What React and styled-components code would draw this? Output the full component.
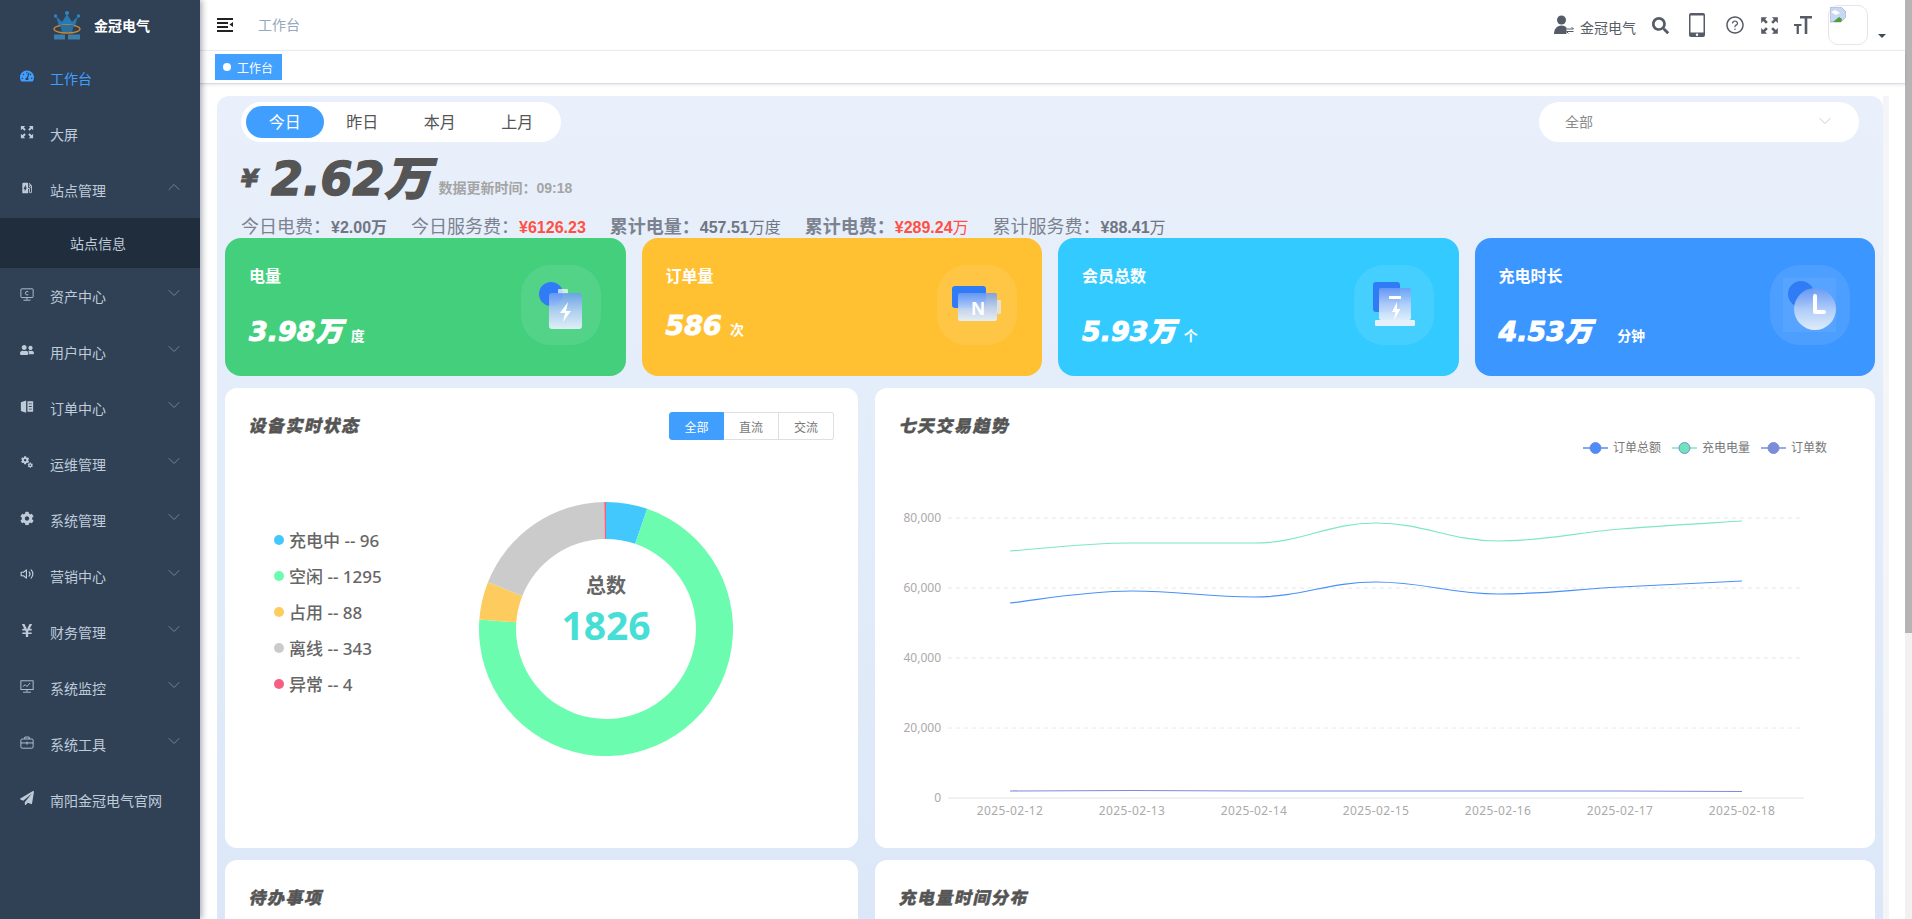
import React from 'react';
import styled, { createGlobalStyle } from 'styled-components';
import { ChevronDown, ChevronUp } from 'lucide-react';
import {
  FaTachometerAlt,
  FaUserFriends,
  FaCog,
  FaYenSign,
  FaPaperPlane,
  FaSearch,
} from 'react-icons/fa';
import { MdEvStation, MdMiscellaneousServices } from 'react-icons/md';
import { FiVolume2 } from 'react-icons/fi';
import { AiOutlineQuestionCircle } from 'react-icons/ai';

const SANS = '"Liberation Sans", "Noto Sans CJK SC", sans-serif';
const HEAVY = '"DejaVu Sans", "Noto Sans CJK SC", sans-serif';
const NOTO = '"Noto Sans", "Noto Sans CJK SC", sans-serif';

const GlobalStyle = createGlobalStyle`
  html, body {
    margin: 0;
    height: 100%;
    overflow: hidden;
    background: #fff;
    font-family: ${SANS};
  }
  * { box-sizing: border-box; }
`;

const Layout = styled.div`
  display: flex;
  width: 1912px;
  height: 919px;
  overflow: hidden;
`;

/* sidebar */
const Sidebar = styled.aside`
  width: 200px;
  flex: none;
  background: #304156;
  box-shadow: 2px 0 6px rgba(0, 21, 41, 0.35);
  position: relative;
  z-index: 2;
`;

const Brand = styled.div`
  height: 50px;
  display: flex;
  align-items: center;
  padding-left: 53px;
  gap: 13px;
  color: #fff;
  font-size: 14px;
  font-weight: 700;
  font-family: "Noto Sans CJK SC", sans-serif;
`;

const MenuRow = styled.div`
  height: 56px;
  display: flex;
  align-items: center;
  padding-left: 20px;
  font-size: 14px;
  color: ${(p) => (p.$active ? '#409eff' : '#bfcbd9')};
`;

const MenuIcon = styled.span`
  width: 14px;
  height: 14px;
  margin-right: 16px;
  margin-top: -4px;
  display: flex;
  align-items: center;
  justify-content: center;
`;

const Chevron = styled.span`
  margin-left: auto;
  margin-right: 16px;
  margin-top: -6px;
  display: flex;
  color: #74828f;
`;

const SubRow = styled.div`
  height: 50px;
  display: flex;
  align-items: center;
  padding-left: 70px;
  background: #1f2d3d;
  font-size: 14px;
  color: #bfcbd9;
`;

/* navbar and tags */
const Main = styled.div`
  width: 1705px;
  flex: none;
  display: flex;
  flex-direction: column;
  min-width: 0;
`;

const Navbar = styled.header`
  height: 51px;
  flex: none;
  display: flex;
  align-items: center;
  padding: 0 19px 0 17px;
  border-bottom: 1px solid #eceef0;
`;

const Crumb = styled.span`
  margin-left: 25px;
  padding-bottom: 2px;
  font-size: 14px;
  color: #97a8be;
`;

const NavRight = styled.div`
  margin-left: auto;
  display: flex;
  align-items: center;
  color: #5a5e66;
  height: 50px;
`;

const NavName = styled.span`
  font-size: 14px;
  margin: 0 16px 0 6px;
  color: #5a5e66;
  padding-top: 3px;
`;

const NavIcon = styled.span`
  display: flex;
  margin-right: ${(p) => p.$gap}px;
  color: #555c68;
`;

const Avatar = styled.div`
  width: 40px;
  height: 40px;
  border: 1px solid #e3e5e8;
  border-radius: 10px;
  padding: 1px 0 0 1px;
`;

const Caret = styled.span`
  width: 0;
  height: 0;
  margin: 22px 0 0 10px;
  border-left: 4px solid transparent;
  border-right: 4px solid transparent;
  border-top: 4px solid #3f4a5a;
`;

const TagsBar = styled.div`
  height: 33px;
  flex: none;
  display: flex;
  align-items: center;
  padding-left: 15px;
  background: #fff;
  border-bottom: 1px solid #d8dce5;
  box-shadow: 0 1px 3px rgba(0, 0, 0, 0.1);
  position: relative;
`;

const Tag = styled.div`
  height: 26px;
  width: 67px;
  background: #42a0ff;
  color: #fff;
  font-size: 12px;
  display: flex;
  align-items: center;
  padding-left: 8px;
  gap: 6px;

  &::before {
    content: '';
    width: 8px;
    height: 8px;
    border-radius: 50%;
    background: #fff;
  }
`;

/* dashboard */
const Content = styled.main`
  flex: 1;
  min-height: 0;
  overflow: hidden;
  display: flex;
  padding: 12px 0 0 17px;
`;

const Panel = styled.div`
  width: 1666px;
  height: 1000px;
  flex: none;
  padding: 6px 8px 0;
  border-radius: 12px 12px 0 0;
  background: linear-gradient(180deg, #e9f0fb 0%, #dbe7f8 85%);
`;

const Strip = styled.div`
  width: 6px;
  background: #f4f5f7;
`;

const TopRow = styled.div`
  display: flex;
  justify-content: space-between;
  padding: 0 16px;
`;

const Periods = styled.div`
  display: flex;
  width: 320px;
  height: 40px;
  padding: 4px 5px;
  border-radius: 20px;
  background: #fff;
`;

const Period = styled.div`
  width: 78px;
  height: 32px;
  padding-bottom: 2px;
  border-radius: 16px;
  display: flex;
  align-items: center;
  justify-content: center;
  font-size: 16px;
  color: ${(p) => (p.$active ? '#fff' : '#555')};
  background: ${(p) => (p.$active ? '#409eff' : 'transparent')};
`;

const SitePicker = styled.div`
  width: 320px;
  height: 40px;
  border-radius: 20px;
  background: #fff;
  display: flex;
  align-items: center;
  justify-content: space-between;
  padding: 0 24px 2px 26px;
  font-size: 14px;
  color: #8c8c8c;
`;

const AmountRow = styled.div`
  height: 65px;
  display: flex;
  align-items: center;
  padding: 8px 0 0 16px;
  color: #555;
`;

const Yen = styled.span`
  font-family: ${HEAVY};
  font-size: 25px;
  font-weight: 700;
  font-style: italic;
  width: 30px;
  -webkit-text-stroke: 0.8px #555;
`;

const Amount = styled.span`
  font-family: ${HEAVY};
  font-size: 46px;
  line-height: 1;
  font-weight: 900;
  font-style: italic;
  -webkit-text-stroke: 1.5px #555;
`;

const UpdatedAt = styled.span`
  font-size: 14px;
  font-weight: 700;
  color: #a4a4a4;
  margin: 16px 0 0 8px;
`;

const StatsRow = styled.div`
  height: 31px;
  display: flex;
  align-items: center;
  gap: 24px;
  padding: 4px 0 0 16px;
`;

const Stat = styled.span`
  font-size: 18px;
  color: #7b8290;
  font-weight: ${(p) => (p.$bold ? 700 : 400)};
`;

const StatValue = styled.span`
  font-size: 16px;
  font-weight: 700;
  color: ${(p) => (p.$red ? '#ff5043' : '#6f7684')};

  small {
    font-size: 16px;
    font-weight: 400;
  }
`;

const CardRow = styled.div`
  display: grid;
  grid-template-columns: repeat(4, 1fr);
  gap: 16px;
`;

const StatCard = styled.div`
  position: relative;
  height: 138px;
  border-radius: 16px;
  padding: 29px 24px 0;
  color: #fff;
  background: ${(p) => p.$color};
`;

const StatTitle = styled.div`
  font-size: 16px;
  font-weight: 700;
  line-height: 20px;
`;

const StatNumber = styled.div`
  display: flex;
  align-items: baseline;
  margin-top: 23px;
  height: 34px;
`;

const BigValue = styled.span`
  font-family: ${HEAVY};
  font-size: 27px;
  font-weight: 900;
  font-style: italic;
  -webkit-text-stroke: 1px #fff;
`;

const Unit = styled.span`
  font-size: 14px;
  font-weight: 700;
  margin-left: ${(p) => p.$gap || 8}px;
`;

const Squircle = styled.div`
  position: absolute;
  right: 25px;
  top: 27px;
  width: 80px;
  height: 80px;
  border-radius: 30px;
  background: rgba(255, 255, 255, 0.09);
`;

const ChartRow = styled.div`
  display: grid;
  grid-template-columns: 633px 1000px;
  gap: 17px;
  margin-top: 12px;
`;

const Card = styled.section`
  background: #fff;
  border-radius: 12px;
  height: ${(p) => p.$h}px;
  padding: 24px 24px 0;
`;

const CardHead = styled.div`
  display: flex;
  align-items: center;
  justify-content: space-between;
  height: 28px;
`;

const CardTitle = styled.h3`
  margin: -4px 0 0 1px;
  font-family: "Noto Sans CJK SC", sans-serif;
  font-size: 17px;
  font-weight: 900;
  letter-spacing: 1.5px;
  color: #555;
  -webkit-text-stroke: 0.4px #555;
  transform: skewX(-12deg);
  transform-origin: left center;
`;

const Radio = styled.div`
  display: flex;
`;

const RadioItem = styled.div`
  width: 55px;
  height: 28px;
  display: flex;
  align-items: center;
  justify-content: center;
  font-size: 12px;
  color: ${(p) => (p.$on ? '#fff' : '#777')};
  background: ${(p) => (p.$on ? '#409eff' : '#fff')};
  border: 1px solid ${(p) => (p.$on ? '#409eff' : '#dcdfe6')};
  border-left-width: ${(p) => (p.$first ? 1 : 0)}px;
  border-radius: ${(p) => (p.$first ? '3px 0 0 3px' : p.$last ? '0 3px 3px 0' : '0')};
`;

const DeviceBody = styled.div`
  display: flex;
  align-items: flex-start;
  margin-top: 62px;
`;

const DeviceLegend = styled.ul`
  list-style: none;
  margin: 19px 0 0 25px;
  padding: 0;
  width: 205px;
`;

const LegendItem = styled.li`
  height: 36px;
  display: flex;
  align-items: center;
  gap: 5px;
  font-family: ${NOTO};
  font-size: 17px;
  font-weight: 500;
  color: #666;

  &::before {
    content: '';
    width: 10px;
    height: 10px;
    margin-top: 1px;
    border-radius: 50%;
    background: ${(p) => p.$color};
  }
`;

const Donut = styled.div`
  position: relative;
  width: 254px;
  height: 254px;
`;

const DonutCenter = styled.div`
  position: absolute;
  left: 0;
  right: 0;
  top: 70px;
  display: flex;
  flex-direction: column;
  align-items: center;
  font-family: ${NOTO};
  font-weight: 700;
`;

const DonutLabel = styled.span`
  font-size: 20px;
  line-height: 28px;
  color: #666;
`;

const DonutValue = styled.span`
  font-size: 39px;
  line-height: 50px;
  color: #47ded5;
`;

const TrendSvg = styled.svg`
  display: block;
  margin-left: -24px;
`;

const Scrollbar = styled.div`
  width: 7px;
  flex: none;
  background: #f1f1f1;
`;

const ScrollThumb = styled.div`
  height: 633px;
  background: #b4b4b4;
`;

/* drawings */
const Svg14 = ({ children, fill = 'currentColor', stroke = 'none' }) => (
  <svg width="15" height="15" viewBox="0 0 16 16" fill={fill} stroke={stroke}>
    {children}
  </svg>
);

const FullscreenIcon = ({ size = 16 }) => (
  <svg width={size} height={size} viewBox="0 0 16 16" fill="currentColor">
    <path d="M1 1h5L4.300 2.700 6.600 5 5 6.600 2.700 4.300 1 6zM15 1v5l-1.700-1.700L11 6.600 9.400 5l2.300-2.300L10 1zM1 15v-5l1.700 1.700L5 9.400 6.600 11l-2.300 2.300L6 15zM15 15h-5l1.700-1.700L9.400 11 11 9.400l2.300 2.300L15 10z" />
  </svg>
);

const AssetIcon = () => (
  <Svg14 fill="none" stroke="currentColor">
    <rect x="1" y="1.500" width="14" height="10" rx="1" />
    <path d="M8 11.500V14M4 14.500h8M9.500 5a2 2 0 1 0 0 3" />
  </Svg14>
);

const OrderIcon = () => (
  <Svg14>
    <path d="M1 3l6-2v14l-6-2z" />
    <path d="M8.500 2H15v12H8.500zM10 4.500v1h3.500v-1zM10 7.500v1h3.500v-1zM10 10.500v1h3.500v-1z" fillRule="evenodd" />
  </Svg14>
);

const MonitorIcon = () => (
  <Svg14 fill="none" stroke="currentColor">
    <rect x="1" y="1.500" width="14" height="10" />
    <path d="M8 11.500V14M3.500 14.500h9M3.500 8l2.500-2 2 2 3.500-4" />
  </Svg14>
);

const ToolIcon = () => (
  <Svg14 fill="none" stroke="currentColor">
    <rect x="1" y="4" width="14" height="10.500" rx="1.500" />
    <path d="M5.500 4V1.800h5V4M1 8.500h14M8 7v3.500" />
  </Svg14>
);

const Hamburger = () => (
  <svg width="16" height="14" viewBox="0 0 16 14" fill="#222">
    <rect y="0" width="16" height="2" />
    <rect y="4" width="11" height="2" />
    <rect y="8" width="11" height="2" />
    <rect y="12" width="16" height="2" />
    <path d="M16 4v5l-3.500-2.500z" />
  </svg>
);

const UserSwitch = () => (
  <svg width="20" height="20" viewBox="0 0 20 20" fill="#555c68">
    <circle cx="7.500" cy="5" r="4.500" />
    <path d="M0 19c0-5 3-8.500 7.500-8.500 2 0 3.700.7 5 2V19z" />
    <path d="M12.500 14h7l-2-2M19.500 16.500h-7l2 2" fill="none" stroke="#555c68" strokeWidth="1" />
  </svg>
);

const PhoneIcon = () => (
  <svg width="16" height="24" viewBox="0 0 16 24">
    <rect x="0" y="0" width="16" height="24" rx="2" fill="#555c68" />
    <rect x="1.500" y="2.500" width="13" height="17" fill="#fff" />
    <circle cx="8" cy="21.700" r="1.200" fill="#fff" />
  </svg>
);

const FontSizeIcon = () => (
  <svg width="18" height="18" viewBox="0 0 18 18" fill="#555c68">
    <path d="M6 0h12v2.500h-4.700V18h-2.600V2.500H6z" />
    <path d="M0 8h7.500v2H4.900v8H2.600v-8H0z" />
  </svg>
);

const BrokenImage = () => (
  <svg width="16" height="16" viewBox="0 0 16 16">
    <path d="M0 0h11l5 5v5L11 15H0z" fill="#c8d8f4" stroke="#9aa3ad" strokeWidth="0.600" />
    <path d="M1 5l4-2 5 3-4 2z" fill="#fff" />
    <path d="M3 15l6-5 3 2-1 3z" fill="#4f9e3a" />
  </svg>
);

const Logo = () => (
  <svg width="28" height="29" viewBox="0 0 28 29">
    <circle cx="14" cy="2" r="2" fill="#2f86c0" />
    <circle cx="2.500" cy="5" r="1.700" fill="#2f86c0" />
    <circle cx="25.500" cy="5" r="1.700" fill="#2f86c0" />
    <path d="M3 5l6 6 5-8 5 8 6-6-3 10H6z" fill="#2679b2" />
    <ellipse cx="14" cy="18" rx="13" ry="4" fill="none" stroke="#c98a35" strokeWidth="1.300" />
    <path d="M7 14h14l-2 7H9z" fill="#2b6f9f" />
    <rect x="1" y="23.500" width="11" height="5" fill="#3f7ea8" />
    <rect x="15" y="23.500" width="12" height="5" fill="#3f7ea8" />
  </svg>
);

const Glass = ({ id }) => (
  <linearGradient id={id} x1="0" y1="0" x2="0" y2="1">
    <stop offset="0" stopColor="#6e9cf4" stopOpacity="0.85" />
    <stop offset="0.5" stopColor="#b6cff8" stopOpacity="0.92" />
    <stop offset="1" stopColor="#e6f0fb" stopOpacity="0.95" />
  </linearGradient>
);

const BatteryBolt = () => (
  <svg width="80" height="80" viewBox="0 0 80 80">
    <defs><Glass id="g1" /></defs>
    <circle cx="30" cy="29" r="12" fill="#2f7cf6" />
    <rect x="37" y="24" width="10" height="5" rx="1" fill="#fff" opacity="0.7" />
    <rect x="28" y="28" width="33" height="36" rx="3" fill="url(#g1)" />
    <path d="M47 37l-8 11h5l-2 9 8-11h-5z" fill="#fff" />
  </svg>
);

const BatteryN = () => (
  <svg width="80" height="80" viewBox="0 0 80 80">
    <defs><Glass id="g2" /></defs>
    <rect x="15" y="21" width="34" height="22" rx="3" fill="#2f7cf6" />
    <rect x="60" y="35" width="4" height="14" rx="1" fill="#dfe8f5" opacity="0.8" />
    <rect x="21" y="28" width="39" height="28" rx="2" fill="url(#g2)" />
    <text x="41" y="50" textAnchor="middle" fontFamily="Liberation Sans, sans-serif" fontWeight="700" fontSize="19" fill="#fff">N</text>
  </svg>
);

const Charger = () => (
  <svg width="80" height="80" viewBox="0 0 80 80">
    <defs><Glass id="g3" /></defs>
    <rect x="19" y="17" width="27" height="30" rx="3" fill="#2f7cf6" />
    <rect x="25" y="23" width="32" height="32" rx="2" fill="url(#g3)" />
    <rect x="21" y="55" width="40" height="6" rx="1" fill="#e6f0fb" />
    <rect x="35" y="31" width="12" height="3" fill="#fff" />
    <path d="M43 37l-5 10h3.500l-1.500 8 6.500-11H43z" fill="#fff" />
  </svg>
);

const Clock = () => (
  <svg width="80" height="80" viewBox="0 0 80 80">
    <defs><Glass id="g4" /></defs>
    <rect x="13" y="13" width="53" height="54" fill="#fff" opacity="0.06" />
    <ellipse cx="31" cy="29" rx="13" ry="13" fill="#2f7cf6" />
    <circle cx="45" cy="44" r="21" fill="url(#g4)" />
    <path d="M45 31v16h9" fill="none" stroke="#fff" strokeWidth="4" strokeLinecap="round" strokeLinejoin="round" />
  </svg>
);

const menuTop = [
  { label: '工作台', icon: <FaTachometerAlt size={16} />, active: true },
  { label: '大屏', icon: <FullscreenIcon /> },
  { label: '站点管理', icon: <MdEvStation size={18} />, open: true },
];

const menuRest = [
  { label: '资产中心', icon: <AssetIcon />, more: true },
  { label: '用户中心', icon: <FaUserFriends size={16} />, more: true },
  { label: '订单中心', icon: <OrderIcon />, more: true },
  { label: '运维管理', icon: <MdMiscellaneousServices size={16} />, more: true },
  { label: '系统管理', icon: <FaCog size={15} />, more: true },
  { label: '营销中心', icon: <FiVolume2 size={16} />, more: true },
  { label: '财务管理', icon: <FaYenSign size={15} />, more: true },
  { label: '系统监控', icon: <MonitorIcon />, more: true },
  { label: '系统工具', icon: <ToolIcon />, more: true },
  { label: '南阳金冠电气官网', icon: <FaPaperPlane size={14} /> },
];

const NavItem = ({ item }) => (
  <MenuRow $active={item.active}>
    <MenuIcon>{item.icon}</MenuIcon>
    {item.label}
    {(item.more || item.open) && (
      <Chevron>
        {item.open ? <ChevronUp size={20} strokeWidth={1.2} /> : <ChevronDown size={20} strokeWidth={1.2} />}
      </Chevron>
    )}
  </MenuRow>
);

const statCards = [
  { title: '电量', value: '3.98万', unit: '度', color: '#43cf7c', icon: <BatteryBolt /> },
  { title: '订单量', value: '586', unit: '次', color: '#ffc032', icon: <BatteryN /> },
  { title: '会员总数', value: '5.93万', unit: '个', color: '#33cbff', icon: <Charger /> },
  { title: '充电时长', value: '4.53万', unit: '分钟', gap: 25, color: '#3b96ff', icon: <Clock /> },
];

const deviceStates = [
  { label: '充电中', count: 96, color: '#42c8fc' },
  { label: '空闲', count: 1295, color: '#6bfcb0' },
  { label: '占用', count: 88, color: '#fecb5f' },
  { label: '离线', count: 343, color: '#cbcbcb' },
  { label: '异常', count: 4, color: '#f85e82' },
];

const arcPath = (from, to, R, r) => {
  const pt = (a, rad) => {
    const t = ((a - 90) * Math.PI) / 180;
    return `${(127 + rad * Math.cos(t)).toFixed(2)} ${(127 + rad * Math.sin(t)).toFixed(2)}`;
  };
  const large = to - from > 180 ? 1 : 0;
  return `M${pt(from, R)}A${R} ${R} 0 ${large} 1 ${pt(to, R)}L${pt(to, r)}A${r} ${r} 0 ${large} 0 ${pt(from, r)}Z`;
};

const DonutChart = () => {
  const total = deviceStates.reduce((sum, d) => sum + d.count, 0);
  let angle = 0;
  return (
    <svg width="254" height="254" viewBox="0 0 254 254">
      {deviceStates.map((d) => {
        const from = angle;
        angle += (d.count / total) * 360;
        return <path key={d.label} d={arcPath(from, angle, 127, 90)} fill={d.color} />;
      })}
    </svg>
  );
};

// the curve stays flat at peaks and valleys, the way echarts smooths a line
const smooth = (pts) => {
  const slope = (i) => {
    const prev = pts[Math.max(i - 1, 0)];
    const next = pts[Math.min(i + 1, pts.length - 1)];
    const turns = (pts[i][1] - prev[1]) * (next[1] - pts[i][1]) <= 0 && i > 0 && i < pts.length - 1;
    return [(next[0] - prev[0]) * 0.2, turns ? 0 : (next[1] - prev[1]) * 0.2];
  };
  let d = `M${pts[0][0]} ${pts[0][1]}`;
  for (let i = 0; i < pts.length - 1; i++) {
    const a = slope(i);
    const b = slope(i + 1);
    d += `C${pts[i][0] + a[0]} ${pts[i][1] + a[1]} ${pts[i + 1][0] - b[0]} ${pts[i + 1][1] - b[1]} ${pts[i + 1][0]} ${pts[i + 1][1]}`;
  }
  return d;
};

const days = ['2025-02-12', '2025-02-13', '2025-02-14', '2025-02-15', '2025-02-16', '2025-02-17', '2025-02-18'];
const dayX = days.map((_, i) => 1010 + i * 122);
const series = [
  { color: '#7be8c0', ys: [551, 543, 543, 523, 541, 529, 521] },
  { color: '#4a90f8', ys: [603, 591, 597, 582, 594, 587, 581] },
  { color: '#7b8dd8', ys: [791, 790.5, 791, 791, 791, 791, 791.5] },
];
const yTicks = [
  { label: '80,000', y: 518 },
  { label: '60,000', y: 588 },
  { label: '40,000', y: 658 },
  { label: '20,000', y: 728 },
];
const chartLegend = [
  { label: '订单总额', x: 1583, line: '#4a90f8', fill: '#4d8dfb' },
  { label: '充电电量', x: 1672, line: '#7be8c0', fill: '#6fe3b9' },
  { label: '订单数', x: 1761, line: '#7b8dd8', fill: '#7b8dd8' },
];

// viewBox keeps page coordinates, so the numbers below read straight off the reference
const TrendChart = () => (
  <TrendSvg width="1000" height="400" viewBox="875 440 1000 400" fontFamily={NOTO}>
    {chartLegend.map((l) => (
      <g key={l.label}>
        <line x1={l.x} x2={l.x + 25} y1="448" y2="448" stroke={l.line} strokeWidth="1.5" />
        <circle cx={l.x + 12.5} cy="448" r="5.5" fill={l.fill} stroke="#7b8dd8" strokeWidth="1" />
        <text x={l.x + 30} y="452" fontSize="12" fill="#777">{l.label}</text>
      </g>
    ))}
    {yTicks.map((t) => (
      <g key={t.y}>
        <line x1="948" x2="1804" y1={t.y} y2={t.y} stroke="#e8e8e8" strokeDasharray="4 4" />
        <text x="941" y={t.y + 4} fontSize="12" fill="#aaa" textAnchor="end">{t.label}</text>
      </g>
    ))}
    <line x1="948" x2="1804" y1="798" y2="798" stroke="#e2e4e8" />
    <text x="941" y="802" fontSize="12" fill="#aaa" textAnchor="end">0</text>
    {days.map((d, i) => (
      <text key={d} x={dayX[i]} y="815" fontSize="12" letterSpacing="0.4" fill="#aaa" textAnchor="middle">{d}</text>
    ))}
    {series.map((s) => (
      <path key={s.color} d={smooth(s.ys.map((y, i) => [dayX[i], y]))} fill="none" stroke={s.color} strokeWidth="1.2" />
    ))}
  </TrendSvg>
);

const App = () => (
  <Layout>
    <GlobalStyle />
    <Sidebar>
      <Brand>
        <Logo />
        金冠电气
      </Brand>
      {menuTop.map((item) => (
        <NavItem key={item.label} item={item} />
      ))}
      <SubRow>站点信息</SubRow>
      {menuRest.map((item) => (
        <NavItem key={item.label} item={item} />
      ))}
    </Sidebar>

    <Main>
      <Navbar>
        <Hamburger />
        <Crumb>工作台</Crumb>
        <NavRight>
          <UserSwitch />
          <NavName>金冠电气</NavName>
          <NavIcon $gap={20}><FaSearch size={17} /></NavIcon>
          <NavIcon $gap={20}><PhoneIcon /></NavIcon>
          <NavIcon $gap={15}><AiOutlineQuestionCircle size={20} /></NavIcon>
          <NavIcon $gap={15}><FullscreenIcon size={19} /></NavIcon>
          <NavIcon $gap={16}><FontSizeIcon /></NavIcon>
          <Avatar><BrokenImage /></Avatar>
          <Caret />
        </NavRight>
      </Navbar>
      <TagsBar>
        <Tag>工作台</Tag>
      </TagsBar>

      <Content>
        <Panel>
          <TopRow>
            <Periods>
              <Period $active>今日</Period>
              <Period>昨日</Period>
              <Period>本月</Period>
              <Period>上月</Period>
            </Periods>
            <SitePicker>
              全部
              <ChevronDown size={20} strokeWidth={1.2} color="#c8ccd2" />
            </SitePicker>
          </TopRow>

          <AmountRow>
            <Yen>¥</Yen>
            <Amount>2.62万</Amount>
            <UpdatedAt>数据更新时间：09:18</UpdatedAt>
          </AmountRow>

          <StatsRow>
            <Stat>今日电费：<StatValue>¥2.00万</StatValue></Stat>
            <Stat>今日服务费：<StatValue $red>¥6126.23</StatValue></Stat>
            <Stat $bold>累计电量：<StatValue>457.51<small>万度</small></StatValue></Stat>
            <Stat $bold>累计电费：<StatValue $red>¥289.24<small>万</small></StatValue></Stat>
            <Stat>累计服务费：<StatValue>¥88.41<small>万</small></StatValue></Stat>
          </StatsRow>

          <CardRow>
            {statCards.map((c) => (
              <StatCard key={c.title} $color={c.color}>
                <StatTitle>{c.title}</StatTitle>
                <StatNumber>
                  <BigValue>{c.value}</BigValue>
                  <Unit $gap={c.gap}>{c.unit}</Unit>
                </StatNumber>
                <Squircle>{c.icon}</Squircle>
              </StatCard>
            ))}
          </CardRow>

          <ChartRow>
            <Card $h={460}>
              <CardHead>
                <CardTitle>设备实时状态</CardTitle>
                <Radio>
                  <RadioItem $on $first>全部</RadioItem>
                  <RadioItem>直流</RadioItem>
                  <RadioItem $last>交流</RadioItem>
                </Radio>
              </CardHead>
              <DeviceBody>
                <DeviceLegend>
                  {deviceStates.map((d) => (
                    <LegendItem key={d.label} $color={d.color}>{`${d.label} -- ${d.count}`}</LegendItem>
                  ))}
                </DeviceLegend>
                <Donut>
                  <DonutChart />
                  <DonutCenter>
                    <DonutLabel>总数</DonutLabel>
                    <DonutValue>1826</DonutValue>
                  </DonutCenter>
                </Donut>
              </DeviceBody>
            </Card>
            <Card $h={460}>
              <CardHead>
                <CardTitle>七天交易趋势</CardTitle>
              </CardHead>
              <TrendChart />
            </Card>
          </ChartRow>

          <ChartRow>
            <Card $h={140}>
              <CardHead>
                <CardTitle>待办事项</CardTitle>
              </CardHead>
            </Card>
            <Card $h={140}>
              <CardHead>
                <CardTitle>充电量时间分布</CardTitle>
              </CardHead>
            </Card>
          </ChartRow>
        </Panel>
        <Strip />
      </Content>
    </Main>

    <Scrollbar>
      <ScrollThumb />
    </Scrollbar>
  </Layout>
);

export default App;
